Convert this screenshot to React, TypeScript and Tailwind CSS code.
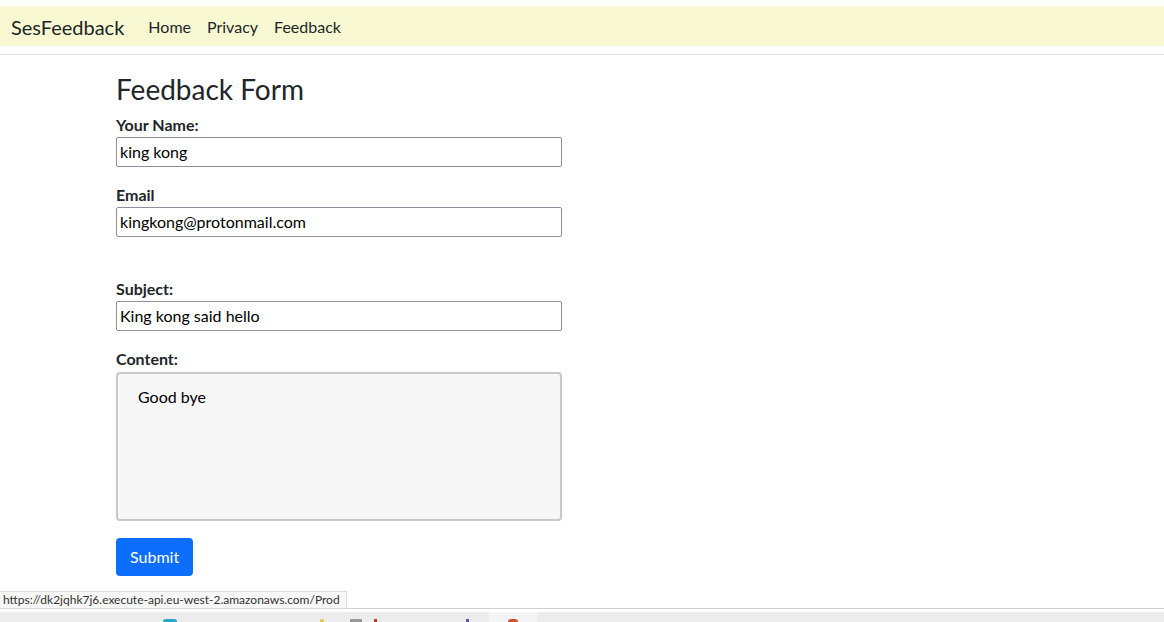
import React from "react";

function Field({ label, value, className = "" }: { label: string; value: string; className?: string }) {
  return (
    <div className={className}>
      <label className="block h-[24px] text-[16px] leading-[24px] font-bold text-[#212529]">{label}</label>
      <input
        readOnly
        value={value}
        className="block w-[446px] h-[30px] border border-[#8f8f9d] rounded-[2px] px-[3px] pb-[2px] text-[16px] text-black bg-white outline-none font-['Lato',sans-serif]"
      />
    </div>
  );
}

export default function App() {
  return (
    <div className="relative w-[1164px] h-[622px] overflow-hidden bg-white font-['Lato',sans-serif] text-[#212529] flex flex-col">
      <header className="pt-[6px] pb-[8px] border-b border-[#dee2e6]">
        <nav className="h-[40px] bg-[#f8f9d2] flex items-center pl-[11px] pt-[2px] gap-[24px]">
          <span className="text-[20px] text-[#212529]">SesFeedback</span>
          <div className="flex gap-[16px] text-[16px] text-[#212529]">
            <span>Home</span>
            <span>Privacy</span>
            <span>Feedback</span>
          </div>
        </nav>
      </header>

      <main className="flex-1 pl-[116px] flex flex-col items-start">
        <h1 className="mt-[17px] mb-[7px] text-[28px] leading-[34px] text-[#212529]">Feedback Form</h1>
        <div className="flex flex-col gap-[16px]">
          <Field label="Your Name:" value="king kong" />
          <Field label="Email" value="kingkong@protonmail.com" />
        </div>
        <div className="mt-[40px] flex flex-col gap-[16px]">
          <Field label="Subject:" value="King kong said hello" />
          <div>
            <label className="block h-[25px] text-[16px] leading-[24px] font-bold">Content:</label>
            <div className="w-[446px] h-[149px] border-2 border-[#c8c8c8] rounded-[4px] bg-[#f7f7f7] pt-[11px] pl-[20px] text-[16px] leading-[24px] text-black">
              Good bye
            </div>
          </div>
        </div>
        <button className="mt-[17px] h-[38px] px-[14px] rounded-[4px] bg-[#0d6efd] text-white text-[16px]">Submit</button>
      </main>

      <footer className="shrink-0">
        <div className="h-[1px] bg-[#d0d0d0]" />
        <div className="h-[3px] bg-white" />
        <div className="h-[10px] bg-[#ececec] flex items-end pl-[163px]">
          <span className="w-[14px] h-[3px] rounded-t-full bg-[#2aa5c8]" />
          <span className="ml-[143px] w-[4px] h-[3px] rounded-t-full bg-[#e8c23a]" />
          <span className="ml-[26px] w-[12px] h-[3px] bg-[#9a9a9a]" />
          <span className="ml-[12px] w-[3px] h-[3px] bg-[#c0392b]" />
          <span className="ml-[89px] w-[3px] h-[3px] bg-[#6a4fb0]" />
          <span className="ml-[20px] w-[48px] h-[10px] bg-[#f5f5f5] flex items-end justify-center">
            <span className="w-[10px] h-[3px] rounded-t bg-[#d4532b]" />
          </span>
        </div>
      </footer>

      <div className="absolute left-0 top-[591px] w-[347px] h-[18px] bg-[#f7f7f7] border border-[#dadada] border-l-0 text-[12px] leading-[16px] pl-[3px] text-[#333] whitespace-nowrap overflow-hidden">
        https://dk2jqhk7j6.execute-api.eu-west-2.amazonaws.com/Prod
      </div>
    </div>
  );
}
